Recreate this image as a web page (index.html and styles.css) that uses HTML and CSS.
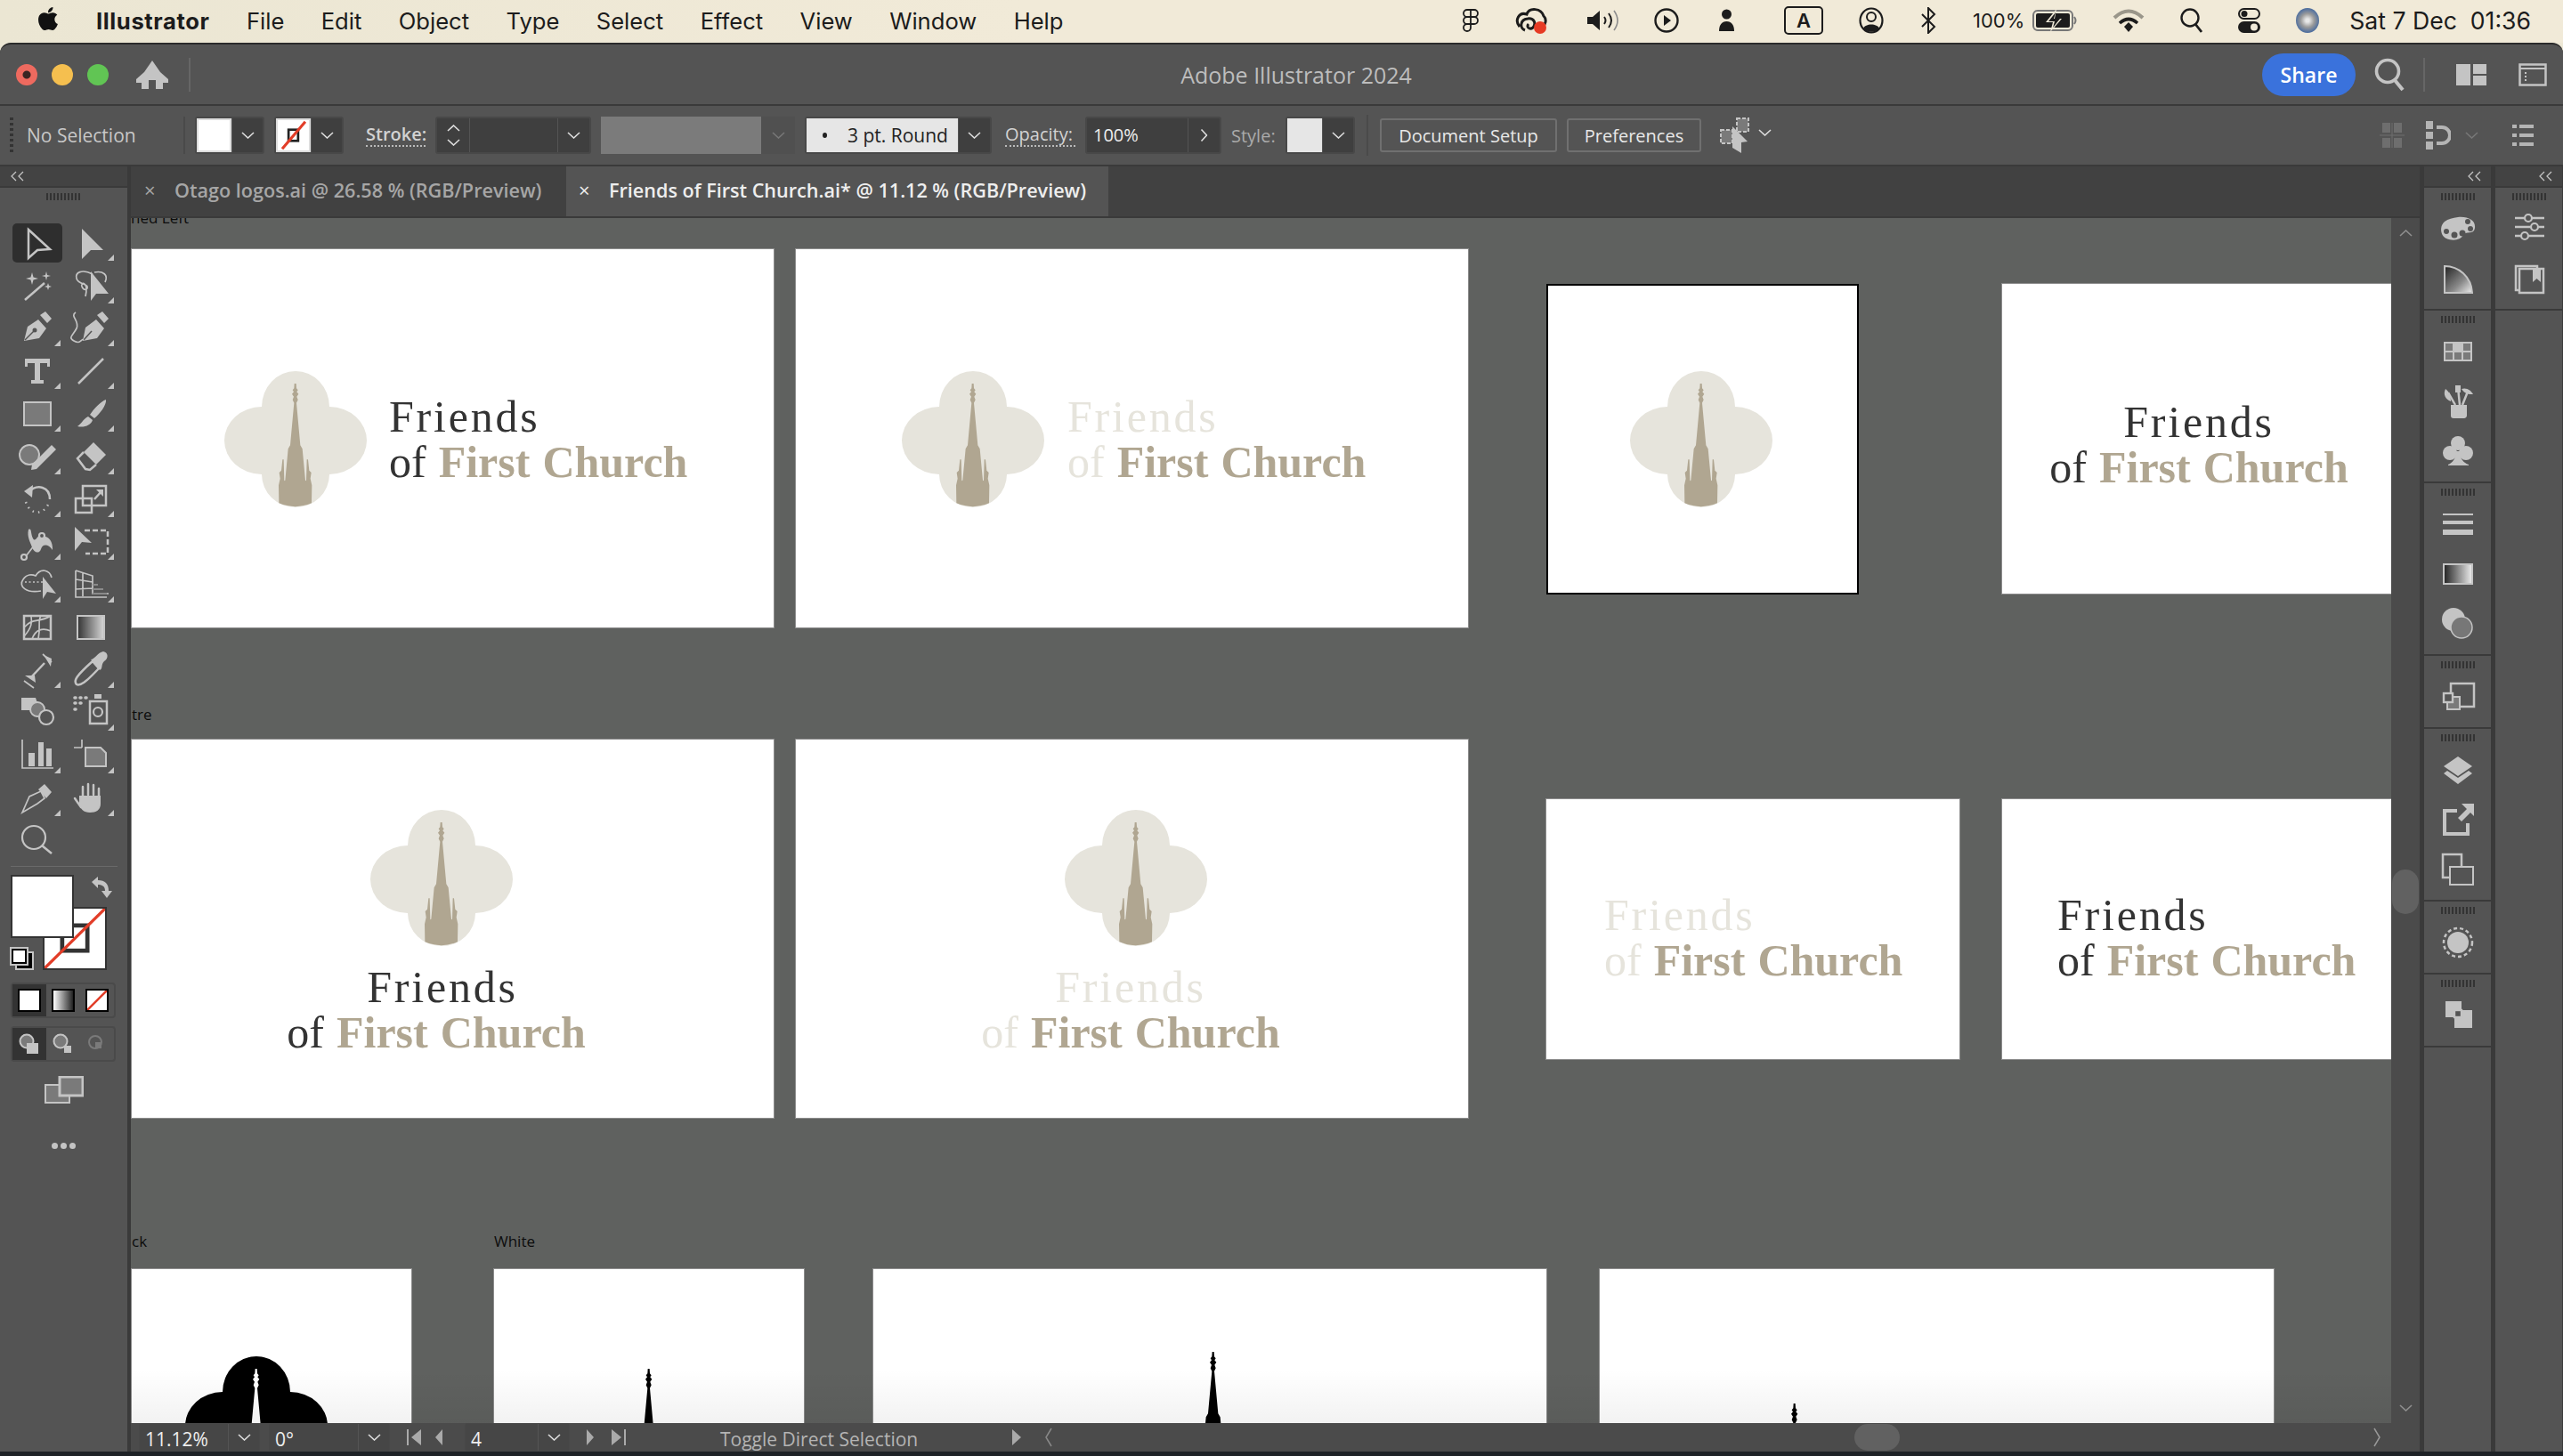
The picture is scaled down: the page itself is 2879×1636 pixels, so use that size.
FILE: index.html
```html
<!DOCTYPE html>
<html lang="en">
<head>
  <meta charset="utf-8">
  <title>Adobe Illustrator 2024</title>
  <link rel="stylesheet" href="styles.css">
</head>
<body>
  <!-- shared shapes -->
  <svg class="sprite" aria-hidden="true">
    <symbol id="chev" viewBox="0 0 15 8"><path d="M1 1l6.500 6L14 1" fill="none" stroke="currentColor" stroke-width="1.600"/></symbol>
    <symbol id="dbl" viewBox="0 0 16 12"><path d="M6 1L1 6l5 5M14 1L9 6l5 5" fill="none" stroke="currentColor" stroke-width="1.300"/></symbol>
    <symbol id="mark" viewBox="105 90 483 459">
      <path class="foil" d="M234 210A114 120 0 0 1 462 210A126 114 0 0 1 462 438A114 111 0 0 1 234 438A126 114 0 0 1 234 210Z"/>
      <path class="spire" d="M344 132L350 132L351 148L356 154L352 160L358 167L352 176L356 187L351 197L364 340L371 352L381 458L384 460L386 388L390 388L394 425L401 432L398 452L403 475L402 535Q347 558 292 535L291 475L296 452L293 432L300 425L304 388L308 388L310 460L313 458L323 352L330 340L343 197L338 187L342 176L336 167L342 160L338 154L343 148Z"/>
    </symbol>
  </svg>

  <header class="menubar">
    <svg class="apple" viewBox="3 2 18 20"><path d="M17.050 20.280c-.98.95-2.050.8-3.080.35-1.090-.46-2.090-.48-3.240 0-1.440.62-2.200.44-3.060-.35C2.790 15.250 3.510 7.590 9.050 7.310c1.350.07 2.290.74 3.080.8 1.180-.24 2.310-.93 3.570-.84 1.510.12 2.650.72 3.400 1.800-3.120 1.870-2.380 5.980.48 7.130-.57 1.500-1.310 2.990-2.540 4.090zM12.030 7.250c-.15-2.230 1.660-4.070 3.740-4.250.29 2.580-2.340 4.500-3.740 4.250z"/></svg>
    <nav class="menus">
      <span class="app-name">Illustrator</span>
      <span>File</span><span>Edit</span><span>Object</span><span>Type</span><span>Select</span><span>Effect</span><span>View</span><span>Window</span><span>Help</span>
    </nav>
    <div class="status">
      <svg class="st-figma" viewBox="0 0 18 26"><path d="M5 1h8a4 4 0 0 1 0 8h-8a4 4 0 0 1 0-8zM5 9h8a4 4 0 0 1 0 8h-8a4 4 0 0 1 0-8zM5 17h4v4a4 4 0 1 1-4-4zM9 1v16" fill="none" stroke="#1c1c1c" stroke-width="1.800"/></svg>
      <svg class="st-cc" viewBox="0 0 42 30"><path d="M6 22C0 15 5 5 14 8C17 0 30 1 33 10C37 14 35 21 30 23M12 26C6 24 6 14 15 13C22 12 25 18 21 23C17 26 13 22 16 19" fill="none" stroke="#1c1c1c" stroke-width="3"/><circle cx="29" cy="23" r="7" fill="#e63b25"/></svg>
      <svg class="st-sound" viewBox="0 0 35 24"><path d="M0 8h6l8-7v22l-8-7H0z" fill="#1c1c1c"/><path d="M19 8q3 4 0 8M24 4q6 8 0 16" fill="none" stroke="#1c1c1c" stroke-width="2"/><path d="M30 1q8 11 0 22" fill="none" stroke="#8d8d8d" stroke-width="1.600"/></svg>
      <svg class="st-play" viewBox="0 0 28 28"><circle cx="14" cy="14" r="12.500" fill="none" stroke="#1c1c1c" stroke-width="2.400"/><path d="M11 8l8 6-8 6z" fill="#1c1c1c"/></svg>
      <svg class="st-person" viewBox="0 0 38 28"><circle cx="13.500" cy="7" r="5.500" fill="#1c1c1c"/><path d="M5 26c0-7 3-11 8.500-11S22 19 22 26z" fill="#1c1c1c"/></svg>
      <span class="st-a">A</span>
      <svg class="st-user" viewBox="0 0 28 30"><ellipse cx="14" cy="15" rx="12.500" ry="13.500" fill="none" stroke="#1c1c1c" stroke-width="2.200"/><circle cx="14" cy="11" r="5" fill="none" stroke="#1c1c1c" stroke-width="2"/><path d="M5 24c2-6 16-6 18 0-4 5-14 5-18 0z" fill="#1c1c1c"/></svg>
      <svg class="st-bt" viewBox="0 0 20 30"><path d="M3 8l14 14-7 7V1l7 7L3 22" fill="none" stroke="#1c1c1c" stroke-width="2"/></svg>
      <div class="st-batt"><span>100%</span>
        <svg viewBox="0 0 50 26"><rect x="1" y="2" width="44" height="22" rx="5" fill="none" stroke="#777" stroke-width="2"/><rect x="4" y="5" width="38" height="16" rx="2" fill="#1c1c1c"/><path d="M47 9q3 4 0 8" fill="none" stroke="#777" stroke-width="2"/><path d="M27 0L15 15h8l-3 11 13-15h-8z" fill="#efe9d8"/><path d="M26 4l-8 10h7l-2 7 8-10h-7z" fill="#1c1c1c"/></svg>
      </div>
      <svg class="st-wifi" viewBox="0 0 36 28"><path d="M2 11q16-15 32 0" fill="none" stroke="#9a968a" stroke-width="4"/><path d="M8 17q10-9 20 0" fill="none" stroke="#1c1c1c" stroke-width="3.600"/><path d="M13 21l5-5 5 5-5 6z" fill="#1c1c1c"/></svg>
      <svg class="st-search" viewBox="0 0 25 28"><circle cx="11" cy="11" r="9.500" fill="none" stroke="#1c1c1c" stroke-width="2.400"/><path d="M17 18l7 9" stroke="#1c1c1c" stroke-width="2.800"/></svg>
      <svg class="st-ctrl" viewBox="0 0 25 28"><rect x="1" y="1" width="23" height="11" rx="5.500" fill="none" stroke="#1c1c1c" stroke-width="2"/><circle cx="7" cy="6.500" r="3.500" fill="#1c1c1c"/><rect x="0" y="15" width="25" height="13" rx="6.500" fill="#1c1c1c"/><circle cx="18" cy="21.500" r="4" fill="#efe9d8"/></svg>
      <span class="st-siri"></span>
      <span class="clock">Sat 7 Dec&nbsp;&nbsp;01:36</span>
    </div>
  </header>

  <div class="window">
    <div class="titlebar">
      <span class="light red"></span><span class="light yellow"></span><span class="light green"></span>
      <svg class="home" viewBox="0 0 36 32"><path d="M18 0L27 13 36 21V25H30V32H22V22H14V32H6V25H0V21L9 13Z" fill="#c4c4c4"/></svg>
      <span class="vrule title-rule"></span>
      <div class="app-title">Adobe Illustrator 2024</div>
      <button class="share">Share</button>
      <svg class="t-search" viewBox="0 0 34 38"><circle cx="15" cy="15" r="12.500" fill="none" stroke="#c4c4c4" stroke-width="3.600"/><path d="M23 25l9 11" stroke="#c4c4c4" stroke-width="4"/></svg>
      <span class="vrule share-rule"></span>
      <svg class="t-layout" viewBox="0 0 34 24"><path d="M0 0h16v24H0zM19 0h15v11H19zM19 13h15v11H19z" fill="#c4c4c4"/></svg>
      <svg class="t-panel" viewBox="0 0 32 26"><rect x="1.500" y="1.500" width="29" height="23" fill="none" stroke="#c4c4c4" stroke-width="2.500"/><path d="M1 6h30" stroke="#c4c4c4" stroke-width="2"/><path d="M7 10h2v2H7zM7 14h2v2H7zM7 18h2v2H7z" fill="#c4c4c4"/></svg>
    </div>

    <div class="controlbar">
      <span class="dots-v"></span>
      <span class="ctl-name">No Selection</span>
      <span class="vrule name-rule"></span>
      <div class="box swatch-box"><span class="swatch"></span><span class="drop"><svg class="chev"><use href="#chev"/></svg></span></div>
      <div class="box swatch-box"><span class="swatch no-stroke"><svg viewBox="0 0 38 38"><rect x="13" y="12" width="12" height="14" fill="none" stroke="#222" stroke-width="3"/><path d="M5 36L34 2" stroke="#e23d28" stroke-width="3.500"/></svg></span><span class="drop"><svg class="chev"><use href="#chev"/></svg></span></div>
      <span class="ctl-label link stroke-label">Stroke:</span>
      <div class="box stroke-field">
        <span class="spin"><svg class="chev flip"><use href="#chev"/></svg><svg class="chev"><use href="#chev"/></svg></span>
        <span class="field"></span>
        <span class="drop"><svg class="chev"><use href="#chev"/></svg></span>
      </div>
      <div class="variable"><span class="variable-main"></span><span class="drop dim"><svg class="chev"><use href="#chev"/></svg></span></div>
      <div class="box brush-box"><span class="brush"><i></i>3 pt. Round</span><span class="drop"><svg class="chev"><use href="#chev"/></svg></span></div>
      <span class="ctl-label link opacity-label">Opacity:</span>
      <div class="box opacity-field"><span class="field opacity-value">100%</span><span class="drop"><svg class="chev turn"><use href="#chev"/></svg></span></div>
      <span class="ctl-label style-label">Style:</span>
      <div class="box swatch-box style-box"><span class="swatch pale"></span><span class="drop"><svg class="chev"><use href="#chev"/></svg></span></div>
      <span class="vrule style-rule"></span>
      <button class="ctl-btn doc">Document Setup</button>
      <button class="ctl-btn pref">Preferences</button>
      <svg class="isolate" viewBox="0 0 34 40"><rect x="1" y="14" width="13" height="15" fill="#7a7a7a" stroke="#c4c4c4" stroke-width="2" stroke-dasharray="4 2"/><rect x="19" y="1" width="13" height="15" fill="#7a7a7a" stroke="#c4c4c4" stroke-width="2" stroke-dasharray="4 2"/><path d="M14 10L31 27 24 28 24 40 14 34Z" fill="#c4c4c4"/></svg>
      <svg class="chev iso-chev"><use href="#chev"/></svg>
      <div class="ctl-right">
        <svg class="al-grid" viewBox="0 0 28 28"><path d="M3 0h9v11H3zM16 0h9v11h-9zM3 17h9v11H3zM16 17h9v11h-9z" fill="#6e6e6e"/><path d="M0 14h28M14 0v28" stroke="#6e6e6e"/></svg>
        <svg class="al-mag" viewBox="0 0 28 32"><path d="M0 0h8v9H0zM0 12h8v8H0zM0 23h8v9H0z" fill="#b4b4b4"/><path d="M12 7h6a9 9 0 0 1 0 18h-6" fill="none" stroke="#b4b4b4" stroke-width="4"/></svg>
        <svg class="chev al-chev"><use href="#chev"/></svg>
        <svg class="al-list" viewBox="0 0 24 28"><path d="M0 2h5v4H0zM8 2h16v4H8zM0 12h5v4H0zM8 12h16v4H8zM0 22h5v4H0zM8 22h16v4H8z" fill="#b4b4b4"/></svg>
      </div>
    </div>

    <div class="work">
      <aside class="toolbar">
        <div class="collapse left-c"><svg class="dbl"><use href="#dbl"/></svg></div>
        <div class="tool-panel">
          <span class="grip"></span>
          <div class="tools">
            <button class="tool active"><svg viewBox="0 0 60 48"><path class="ln" d="M20 9L44 31 30 32 20 41Z"/></svg></button>
            <button class="tool more"><svg viewBox="0 0 60 48"><path class="ic" d="M20 8L44 32 30 32 20 42Z"/></svg></button>

            <button class="tool"><svg viewBox="0 0 60 48"><path class="ln" stroke-width="4" d="M16 40L38 21"/><path class="ic" d="M24 9l1.500 5.500L31 16l-5.500 1.500L24 23l-1.500-5.500L17 16l5.500-1.500zM40 8l1 4 4 1-4 1-1 4-1-4-4-1 4-1zM42 21l1 3 3 1-3 1-1 3-1-3-3-1 3-1z"/></svg></button>
            <button class="tool more"><svg viewBox="0 0 60 48"><path class="ln thin" d="M32 11C20 5 12 9 14 16S25 21 26 25 22 30 20 25 28 18 24 36M34 9C44 7 50 12 46 20"/><path class="ic" d="M30 8L50 33 36 33 30 41Z"/></svg></button>

            <button class="tool more"><svg viewBox="0 0 60 48"><path class="ic" d="M15 38L19 22 31 14 40 24 32 35ZM33 9L39 5 46 13 41 18Z"/><path class="slit" d="M16 37L26 27"/><circle class="hole" cx="27" cy="26" r="2.500"/></svg></button>
            <button class="tool more"><svg viewBox="0 0 60 48"><path class="ic" d="M21 38L24 23 36 14 45 24 37 35ZM37 9L43 5 50 13 45 18Z"/><path class="slit" d="M22 37L31 27"/><path class="ln thin" d="M13 6C6 10 18 16 14 24S4 34 11 38 18 37 22 36"/></svg></button>

            <button class="tool more"><svg viewBox="0 0 60 48"><path class="ic" d="M16 10H44V19H41V15H33V34H37V38H23V34H27V15H19V19H16Z"/></svg></button>
            <button class="tool more"><svg viewBox="0 0 60 48"><path class="ln" d="M16 38L44 10"/></svg></button>

            <button class="tool more"><svg viewBox="0 0 60 48"><rect class="gr" x="15" y="11" width="30" height="26"/></svg></button>
            <button class="tool more"><svg viewBox="0 0 60 48"><path class="ic" d="M47 8C48 14 40 24 34 29L29 25C33 19 41 10 47 8ZM27 27L32 31C30 37 22 40 15 38C19 36 21 30 27 27Z"/></svg></button>

            <button class="tool more"><svg viewBox="0 0 60 48"><circle class="gr" cx="21" cy="22" r="11"/><path class="ic" d="M46 11L51 16 29 38 23 39 24 33Z"/></svg></button>
            <button class="tool more"><svg viewBox="0 0 60 48"><path class="ic" d="M33 8L47 22 36 33 22 19Z"/><path class="ln" d="M22 19L15 26 24 38 29 39 36 33"/></svg></button>

            <button class="tool more"><svg viewBox="0 0 60 48"><path class="ln" stroke-width="3" d="M20 16C30 6 44 10 44 24"/><path class="ic" d="M15 15L25 8 24 22Z"/><path class="ln" stroke-width="2" stroke-dasharray="1.500 5" d="M17 27C22 42 36 42 42 30"/></svg></button>
            <button class="tool more"><svg viewBox="0 0 60 48"><rect class="ln" x="21" y="9" width="26" height="22"/><rect class="ln" x="13" y="23" width="18" height="16"/><path class="ln" stroke-width="2.500" d="M34 24L42 15"/><path class="ic" d="M36 13H44V21Z"/></svg></button>

            <button class="tool more"><svg viewBox="0 0 60 48"><path class="ic" d="M20 10C24 8 22 14 25 20 28 25 30 16 34 16L32 20C38 14 48 20 47 33 42 26 36 26 34 32 32 38 26 36 24 30 22 24 18 18 20 10Z"/><path class="ln thin" d="M17 40L37 14"/><circle class="hole-ln" cx="15" cy="41" r="3"/><circle class="hole-ln" cx="35" cy="17" r="3"/></svg></button>
            <button class="tool more"><svg viewBox="0 0 60 48"><path class="ic" d="M12 7L31 25 20 24 12 34Z"/><path class="ln" stroke-dasharray="6 3" d="M23 11H49V37H24"/></svg></button>

            <button class="tool more"><svg viewBox="0 0 60 48"><path class="ln thin" d="M34 31C18 34 8 26 14 18 18 12 24 12 28 14 34 4 44 8 46 16"/><path class="ln thin" stroke-dasharray="2 2.500" d="M16 21H36"/><path class="ic" d="M36 15L51 34 41 32 36 40Z"/></svg></button>
            <button class="tool more"><svg viewBox="0 0 60 48"><path class="ln thin" d="M13 8L32 14V34H50M13 8V38H48M13 18L32 21M13 29L32 28M21 10V37"/><path class="dash" d="M32 24H38M32 29H44M32 34H48"/></svg></button>

            <button class="tool"><svg viewBox="0 0 60 48"><rect class="ln" x="15" y="11" width="30" height="26"/><path class="ln thin" d="M15 24C26 12 30 20 45 11M15 34C24 24 24 18 23 11M24 37C28 26 36 24 45 28M31 37C34 22 30 16 34 11"/></svg></button>
            <button class="tool"><svg viewBox="0 0 60 48"><defs><linearGradient id="tg"><stop offset="0" stop-color="#333"/><stop offset="1" stop-color="#d8d8d8"/></linearGradient></defs><rect x="15" y="11" width="30" height="26" fill="url(#tg)" stroke="#c4c4c4" stroke-width="2"/></svg></button>

            <button class="tool more"><svg viewBox="0 0 60 48"><path class="ln thin" d="M15 36L26 44M36 6L46 15"/><path class="ln" stroke-width="3" d="M22 33L38 16"/><path class="ic" d="M16 30L28 38 27 30ZM37 7L45 20 46 11Z"/></svg></button>
            <button class="tool more"><svg viewBox="0 0 60 48"><path class="ln" d="M14 40C10 36 14 30 32 14L39 22C24 38 18 42 14 40Z"/><path class="ic" d="M30 12C34 12 38 4 44 3 50 4 50 11 45 14 41 18 44 22 40 24Z"/></svg></button>

            <button class="tool"><svg viewBox="0 0 60 48"><path class="ic" d="M12 7H28L31 16 24 19 24 21 12 21Z"/><circle class="gr" cx="30" cy="20" r="8"/><circle class="hole-ln" cx="40" cy="29" r="8"/></svg></button>
            <button class="tool more"><svg viewBox="0 0 60 48"><path class="dotpath" d="M12 7H13M18 7H19M24 7H25M12 13H13M18 13H19M12 20H13"/><path class="ic" d="M34 3H42V8H34Z"/><rect class="ln" x="29" y="11" width="19" height="25"/><circle class="hole-ln" cx="38" cy="23" r="5"/></svg></button>

            <button class="tool more"><svg viewBox="0 0 60 48"><path class="ln thin" d="M13 6V38H48"/><path class="ic" d="M20 21H27V36H20ZM31 9H37V36H31ZM40 16H46V36H40Z"/></svg></button>
            <button class="tool more"><svg viewBox="0 0 60 48"><path class="ln thin" d="M20 6V15M11 15H20"/><path class="gr" d="M24 15H41L47 21V36H24Z"/></svg></button>

            <button class="tool more"><svg viewBox="0 0 60 48"><path class="ln thin" d="M13 40L21 22 34 16 38 24 30 30Z"/><path class="ic" d="M31 14L38 8 46 17 40 24Z"/></svg></button>
            <button class="tool more"><svg viewBox="0 0 60 48"><path class="ln" stroke-width="5" stroke-linecap="round" d="M21 22V11M27 20V8M33 20V9M39 24V13M19 34L12 24"/><path class="ic" d="M17 21H41V30C41 37 36 40 29 40 22 40 18 36 17 30Z"/></svg></button>

            <button class="tool"><svg viewBox="0 0 60 48"><circle class="hole-ln" cx="26" cy="20" r="13"/><path class="ln" stroke-width="3.500" d="M35 29L46 38"/></svg></button>
          </div>

          <hr class="tool-sep">
          <div class="fill-stroke">
            <span class="big-stroke"><svg viewBox="0 0 72 71"><rect x="21" y="20" width="30" height="30" fill="none" stroke="#333" stroke-width="5"/><path d="M0 71L72 0" stroke="#e23d28" stroke-width="3.500"/></svg></span>
            <span class="big-fill"></span>
            <svg class="swap" viewBox="0 0 24 24"><path d="M1 6L8 0V4C16 4 20 8 20 16H24L18 24 12 16H16C16 11 13 9 8 9V13Z" fill="#c4c4c4"/></svg>
            <span class="mini mini-back"></span><span class="mini mini-front"></span>
          </div>
          <div class="seg">
            <span class="on"><i class="cs solid"></i></span>
            <span><i class="cs grad"></i></span>
            <span><i class="cs none"><svg viewBox="0 0 26 26"><path d="M0 26L26 0" stroke="#e23d28" stroke-width="3"/></svg></i></span>
          </div>
          <div class="seg draw">
            <span class="on"><svg viewBox="0 0 24 24"><circle cx="9" cy="9" r="7.500" fill="#7a7a7a" stroke="#c4c4c4" stroke-width="2"/><rect x="9" y="11" width="13" height="12" fill="#c4c4c4"/></svg></span>
            <span><svg viewBox="0 0 24 24"><circle cx="9" cy="9" r="7.500" fill="#7a7a7a" stroke="#c4c4c4" stroke-width="2"/><rect x="13" y="14" width="8" height="8" fill="#c4c4c4"/></svg></span>
            <span><svg viewBox="0 0 24 24"><circle cx="10" cy="10" r="7" fill="none" stroke="#7a7a7a" stroke-width="2"/><rect x="10" y="10" width="7" height="7" fill="#7a7a7a"/></svg></span>
          </div>
          <svg class="screen" viewBox="0 0 44 31"><rect x="1" y="10" width="27" height="20" fill="#7a7a7a" stroke="#c4c4c4" stroke-width="2"/><rect x="17" y="1" width="26" height="21" fill="#7a7a7a" stroke="#c4c4c4" stroke-width="3"/></svg>
          <div class="ellipsis"><i></i><i></i><i></i></div>
        </div>
      </aside>

      <main class="center">
        <div class="tabs">
          <div class="tab"><span class="x">×</span>Otago logos.ai @ 26.58 % (RGB/Preview)</div>
          <div class="tab current"><span class="x">×</span>Friends of First Church.ai* @ 11.12 % (RGB/Preview)</div>
        </div>
        <div class="view">
          <div class="canvas">
            <span class="lbl lbl-a">ned Left</span>
            <span class="lbl lbl-b">tre</span>
            <span class="lbl lbl-c">ck</span>
            <span class="lbl lbl-d">White</span>

            <section class="board a1">
              <svg class="mark m-a1"><use href="#mark"/></svg>
              <p class="word w-a1">Friends<br>of <b>First Church</b></p>
            </section>
            <section class="board a2">
              <svg class="mark m-a2"><use href="#mark"/></svg>
              <p class="word light w-a2">Friends<br>of <b>First Church</b></p>
            </section>
            <section class="board a3"><svg class="mark m-a3"><use href="#mark"/></svg></section>
            <section class="board a4"><p class="word mid w-a4">Friends<br>of <b>First Church</b></p></section>

            <section class="board a5">
              <svg class="mark m-a5"><use href="#mark"/></svg>
              <p class="word mid w-a5">Friends<br>of <b>First Church</b></p>
            </section>
            <section class="board a6">
              <svg class="mark m-a6"><use href="#mark"/></svg>
              <p class="word mid light w-a6">Friends<br>of <b>First Church</b></p>
            </section>
            <section class="board a7"><p class="word light w-a7">Friends<br>of <b>First Church</b></p></section>
            <section class="board a8"><p class="word w-a8">Friends<br>of <b>First Church</b></p></section>

            <section class="board a9"><svg class="mark black m-a9"><use href="#mark"/></svg></section>
            <section class="board a10"><svg class="mark only m-a10"><use href="#mark"/></svg></section>
            <section class="board a11"><svg class="mark only m-a11"><use href="#mark"/></svg></section>
            <section class="board a12"><svg class="mark only m-a12"><use href="#mark"/></svg></section>
            <div class="fade"></div>
          </div>
          <div class="vscroll">
            <svg class="chev flip up"><use href="#chev"/></svg>
            <span class="vthumb"></span>
            <svg class="chev down"><use href="#chev"/></svg>
          </div>
        </div>
        <div class="statusbar">
          <div class="box sb-box"><span class="field">11.12%</span><span class="drop"><svg class="chev"><use href="#chev"/></svg></span></div>
          <div class="box sb-box"><span class="field">0°</span><span class="drop"><svg class="chev"><use href="#chev"/></svg></span></div>
          <svg class="pager" viewBox="0 0 50 24"><path d="M2 3h2v18H2zM18 3v18L7 12zM42 3l-8 9 8 9z" fill="#aaa"/></svg>
          <div class="box sb-page"><span class="field">4</span><span class="drop"><svg class="chev"><use href="#chev"/></svg></span></div>
          <svg class="pager" viewBox="0 0 50 24"><path d="M2 3v18l8-9zM30 3v18l11-9zM44 3h2v18h-2z" fill="#aaa"/></svg>
          <span class="sb-text">Toggle Direct Selection</span>
          <svg class="sb-arrow" viewBox="0 0 12 24"><path d="M1 3v18l10-9z" fill="#aaa"/></svg>
          <svg class="sb-lt" viewBox="0 0 10 24"><path d="M8 2L2 12l6 10" fill="none" stroke="#888" stroke-width="1.500"/></svg>
          <span class="hthumb"></span>
          <svg class="sb-gt" viewBox="0 0 10 24"><path d="M2 2l6 10-6 10" fill="none" stroke="#999" stroke-width="1.500"/></svg>
        </div>
      </main>

      <aside class="dock">
        <div class="collapse"><svg class="dbl"><use href="#dbl"/></svg></div>
        <div class="group">
          <span class="grip"></span>
          <div class="pi"><svg viewBox="0 0 40 40"><path class="ic" d="M20 7C32 6 40 11 39 19 38 27 30 22 26 27 23 33 14 34 7 31 0 28-1 17 5 12 9 9 14 8 20 7Z"/><circle class="hole" cx="31" cy="12" r="3"/><circle class="hole" cx="34" cy="20" r="3"/><circle class="hole" cx="25" cy="25" r="3.500"/><circle class="hole" cx="16" cy="27" r="3.500"/><circle class="hole" cx="7" cy="23" r="3"/></svg></div>
          <div class="pi"><svg viewBox="0 0 40 40"><defs><linearGradient id="cg" x1="0" y1="0" x2="1" y2="1"><stop offset="0" stop-color="#222"/><stop offset=".6" stop-color="#888"/><stop offset="1" stop-color="#eee"/></linearGradient></defs><path d="M5 6C21 6 35 18 36 36H5Z" fill="url(#cg)" stroke="#c4c4c4" stroke-width="2"/></svg></div>
        </div>
        <div class="group">
          <span class="grip"></span>
          <div class="pi"><svg viewBox="0 0 40 40"><rect class="ic" x="4" y="9" width="32" height="22"/><path class="gr nostroke" d="M6 11H14V19H6ZM26 11H34V19H26ZM6 21H14V29H6ZM16 21H24V29H16ZM26 21H34V29H26Z"/></svg></div>
          <div class="pi"><svg viewBox="0 0 40 40"><path class="ic" d="M12 24H30V36C30 38 28 39 27 39H15C13 39 12 38 12 36Z"/><path class="ln" d="M17 24L9 10M22 24L20 4M25 24L31 9"/><path class="ic" d="M6 6C3 12 6 18 12 20 12 14 10 9 6 6ZM17 2H23V10H17ZM24 6C30 4 35 8 37 12 32 12 28 12 24 6Z"/></svg></div>
          <div class="pi"><svg viewBox="0 0 40 40"><circle class="ic" cx="20" cy="11" r="8"/><circle class="ic" cx="11" cy="22" r="8"/><circle class="ic" cx="29" cy="22" r="8"/><path class="ic" d="M18 20H22C22 28 26 33 32 35V36H9V35C14 33 18 28 18 20Z"/></svg></div>
        </div>
        <div class="group">
          <span class="grip"></span>
          <div class="pi"><svg viewBox="0 0 40 40"><path class="ic" d="M3 8H37V10H3ZM3 16H37V20H3ZM3 26H37V32H3Z"/></svg></div>
          <div class="pi"><svg viewBox="0 0 40 40"><defs><linearGradient id="pg"><stop offset="0" stop-color="#222"/><stop offset="1" stop-color="#eee"/></linearGradient></defs><rect x="4" y="9" width="32" height="22" fill="url(#pg)" stroke="#c4c4c4" stroke-width="2"/></svg></div>
          <div class="pi"><svg viewBox="0 0 40 40"><circle class="ic" cx="15" cy="15" r="13"/><circle cx="24" cy="24" r="12" fill="#777" stroke="#c4c4c4" stroke-width="1.500"/></svg></div>
        </div>
        <div class="group">
          <span class="grip"></span>
          <div class="pi"><svg viewBox="0 0 40 40"><rect class="ln" x="12" y="5" width="26" height="26" stroke-width="2"/><rect class="gr" x="8" y="20" width="14" height="14"/><rect class="boxdark" x="4" y="16" width="10" height="10"/></svg></div>
        </div>
        <div class="group">
          <span class="grip"></span>
          <div class="pi"><svg viewBox="0 0 40 40"><path class="ic" d="M20 5L36 16 20 27 4 16ZM4 24L8 21 20 29 32 21 36 24 20 36Z"/></svg></div>
          <div class="pi"><svg viewBox="0 0 40 40"><path class="ic" d="M3 8H19V12H7V34H29V24H33V38H3Z"/><path class="ic" d="M24 2H38V16L34 12 24 22 20 18 30 8Z"/></svg></div>
          <div class="pi"><svg viewBox="0 0 40 40"><rect class="ln" x="3" y="3" width="21" height="26" stroke-width="2"/><rect x="11" y="17" width="26" height="20" fill="#545454" stroke="#c4c4c4" stroke-width="2"/></svg></div>
        </div>
        <div class="group">
          <span class="grip"></span>
          <div class="pi"><svg viewBox="0 0 40 40"><circle class="ic" cx="20" cy="20" r="12"/><circle class="ln" cx="20" cy="20" r="16" stroke-width="2" stroke-dasharray="4 3"/></svg></div>
        </div>
        <div class="group">
          <span class="grip"></span>
          <div class="pi"><svg viewBox="0 0 40 40"><path class="ic" d="M6 4H24V22H6ZM16 14H36V34H16Z"/><rect class="boxdark" x="16" y="14" width="8" height="8"/></svg></div>
        </div>
        <div class="group rest"></div>
      </aside>

      <aside class="dock">
        <div class="collapse"><svg class="dbl"><use href="#dbl"/></svg></div>
        <div class="group">
          <span class="grip"></span>
          <div class="pi"><svg viewBox="0 0 40 40"><path class="ln" stroke-width="1.800" d="M4 8H14M24 8H37M4 18H21M31 18H37M4 28H10M20 28H37"/><circle class="hole-ln" cx="19" cy="8" r="4"/><circle class="hole-ln" cx="26" cy="18" r="4"/><circle class="hole-ln" cx="15" cy="28" r="4"/></svg></div>
          <div class="pi"><svg viewBox="0 0 40 40"><path class="ln" stroke-width="2" d="M8 33H5V6H29V9"/><rect class="ln" x="9" y="9" width="27" height="27" stroke-width="2"/><path class="ic" d="M24 9H33V24L28.500 20 24 24Z"/></svg></div>
        </div>
        <div class="group rest"></div>
      </aside>
    </div>
  </div>
  <div class="dockedge"></div>
</body>
</html>
```

FILE: styles.css
```css
* {
  box-sizing: border-box;
}
html, body {
  margin: 0;
  padding: 0;
}
body {
  width: 2879px;
  height: 1636px;
  overflow: hidden;
  background: #ece7d5;
  font-family: "Open Sans", "Liberation Sans", sans-serif;
  color: #c4c4c4;
}
button {
  font: inherit;
  padding: 0;
  border: 0;
  background: none;
  color: inherit;
}
svg {
  display: block;
  flex: none;
}
.sprite {
  position: absolute;
  width: 0;
  height: 0;
}
.foil {
  fill: var(--foil, #e6e4dc);
}
.spire {
  fill: var(--spire, #b0a691);
}

/* mac menu bar */
.menubar {
  display: flex;
  align-items: center;
  height: 48px;
  padding: 0 36px 2px 41px;
  background: linear-gradient(90deg, #ebe6d3, #f1ead8 40%, #f1ead8);
  font-family: Inter, "Liberation Sans", sans-serif;
  font-size: 25.600px;
  color: #1c1c1c;
}
.apple {
  width: 26px;
  height: 30px;
  margin-top: -4px;
  fill: #111;
}
.menus {
  display: flex;
  gap: 41.400px;
  margin-left: 41px;
}
.app-name {
  font-weight: 700;
  letter-spacing: 0.6px;
}
.status {
  display: flex;
  align-items: center;
  gap: 40px;
  margin-left: auto;
}
.st-figma { width: 18px; height: 26px; }
.st-cc { width: 42px; height: 30px; }
.st-sound { width: 35px; height: 24px; }
.st-play { width: 28px; height: 28px; }
.st-person { width: 38px; height: 28px; }
.st-a {
  width: 44px;
  height: 32px;
  border: 2px solid #1c1c1c;
  border-radius: 5px;
  font-size: 22px;
  font-weight: 600;
  line-height: 28px;
  text-align: center;
}
.st-user { width: 28px; height: 30px; }
.st-bt { width: 20px; height: 30px; }
.st-batt {
  display: flex;
  align-items: center;
  gap: 9px;
  font-size: 22px;
}
.st-batt svg { width: 50px; height: 26px; }
.st-wifi { width: 36px; height: 28px; }
.st-search { width: 25px; height: 28px; }
.st-ctrl { width: 25px; height: 28px; }
.st-siri {
  width: 26px;
  height: 28px;
  border-radius: 50%;
  background: radial-gradient(circle at 50% 50%, #e8e8e8 10%, #9a9a9a 40%, #4f6f9f 70%, #6a6a62);
}
.clock {
  margin-left: -6px;
  font-size: 26.600px;
  white-space: nowrap;
}

/* app window */
.window {
  display: flex;
  flex-direction: column;
  gap: 2px;
  height: 1583px;
  border-top: 2px solid #2b2b2b;
  border-radius: 12px 12px 0 0;
  background: #3a3a3a;
  overflow: hidden;
}
.titlebar {
  display: flex;
  align-items: center;
  flex: none;
  height: 67px;
  padding-left: 18px;
  background: #545454;
}
.light {
  width: 24px;
  height: 24px;
  margin-right: 16px;
  border-radius: 50%;
}
.red {
  background: radial-gradient(circle, #3a2522 0 4px, #ee6a5f 5px);
}
.yellow { background: #f5bf4f; }
.green { background: #61c554; }
.home {
  width: 36px;
  height: 32px;
  margin-left: 15px;
}
.vrule {
  flex: none;
  width: 2px;
  background: #666;
}
.title-rule {
  height: 38px;
  margin-left: 23px;
}
.app-title {
  flex: 1;
  padding-left: 157px;
  text-align: center;
  font-size: 25px;
  color: #bdbdbd;
}
.share {
  width: 105px;
  height: 48px;
  border-radius: 24px;
  background: #3a72dc;
  color: #fff;
  font-size: 23px;
  font-weight: 600;
}
.t-search {
  width: 34px;
  height: 38px;
  margin-left: 21px;
}
.share-rule {
  height: 38px;
  margin-left: 21px;
}
.t-layout {
  width: 34px;
  height: 24px;
  margin-left: 35px;
}
.t-panel {
  width: 32px;
  height: 26px;
  margin: 0 18px 0 36px;
}

.controlbar {
  display: flex;
  align-items: center;
  flex: none;
  gap: 11px;
  height: 66px;
  background: #545454;
  font-size: 20px;
}
.dots-v {
  width: 4px;
  height: 40px;
  margin-left: 11px;
  background: repeating-linear-gradient(#333 0 3px, transparent 3px 6px);
}
.ctl-name {
  width: 120px;
  margin-left: 4px;
  font-size: 21px;
  white-space: nowrap;
  color: #c8c8c8;
}
.name-rule {
  height: 42px;
  margin-left: 45px;
  background: #4a4a4a;
}
.box {
  display: flex;
  height: 42px;
  border: 2px solid #484848;
  border-radius: 3px;
  background: #3f3f3f;
}
.drop {
  display: flex;
  align-items: center;
  justify-content: center;
  flex: none;
  width: 36px;
  border-left: 1px solid #545454;
  color: #ddd;
}
.dim { color: #777; }
.chev {
  width: 15px;
  height: 8px;
}
.flip { transform: scaleY(-1); }
.turn { transform: rotate(-90deg); }
.swatch-box { width: 78px; }
.swatch {
  flex: none;
  width: 39px;
  background: #fff;
  border: 2px solid #ddd;
}
.swatch.pale {
  background: #e6e6e6;
  border: 0;
}
.no-stroke svg {
  width: 100%;
  height: 100%;
}
.ctl-label {
  white-space: nowrap;
  color: #d2d2d2;
}
.link {
  border-bottom: 2px dotted #bbb;
  line-height: 24px;
}
.stroke-label {
  width: 67px;
  margin-left: 14px;
  font-weight: 600;
}
.stroke-field { width: 175px; }
.spin {
  display: flex;
  flex-direction: column;
  align-items: center;
  justify-content: space-evenly;
  flex: none;
  width: 37px;
  border-right: 1px solid #545454;
  color: #ddd;
}
.field {
  flex: 1;
  padding-left: 8px;
  line-height: 38px;
  color: #eee;
}
.variable {
  display: flex;
  width: 218px;
  height: 42px;
}
.variable-main {
  flex: 1;
  background: #7b7b7b;
}
.variable .drop {
  width: 38px;
  border: 0;
  background: #505050;
}
.brush-box { width: 210px; }
.brush {
  display: flex;
  align-items: center;
  flex: 1;
  padding-left: 18px;
  background: #e6e6e6;
  font-size: 21px;
  color: #222;
  white-space: nowrap;
}
.brush i {
  width: 5px;
  height: 6px;
  margin-right: 23px;
  border-radius: 50%;
  background: #222;
}
.opacity-label {
  width: 79px;
  margin-left: 4px;
}
.opacity-field { width: 153px; }
.opacity-value {
  padding-left: 7px;
}
.style-label {
  width: 51px;
  color: #aaa;
}
.style-box { margin-left: -1px; }
.style-rule {
  height: 46px;
  margin-left: 2px;
  background: #4a4a4a;
}
.ctl-btn {
  height: 38px;
  border: 2px solid #707070;
  border-radius: 3px;
  color: #e8e8e8;
}
.doc { width: 199px; margin-left: 2px; }
.pref { width: 151px; }
.isolate {
  width: 34px;
  height: 40px;
  margin-left: 10px;
}
.iso-chev { margin-left: -2px; margin-top: -6px; color: #ddd; }
.ctl-right {
  display: flex;
  align-items: center;
  margin-left: auto;
  padding-right: 33px;
}
.al-grid { width: 28px; height: 28px; }
.al-mag { width: 28px; height: 32px; margin-left: 24px; }
.al-chev { margin-left: 16px; color: #777; }
.al-list { width: 24px; height: 28px; margin-left: 38px; }

/* work area */
.work {
  display: flex;
  flex: none;
  height: 1444px;
}
.toolbar {
  display: flex;
  flex-direction: column;
  gap: 2px;
  flex: none;
  width: 147px;
  padding-right: 4px;
}
.collapse {
  display: flex;
  align-items: center;
  justify-content: flex-end;
  flex: none;
  height: 22px;
  padding-right: 10px;
  background: #434343;
  color: #c4c4c4;
}
.left-c {
  justify-content: flex-start;
  padding: 0 0 0 12px;
}
.dbl {
  width: 16px;
  height: 12px;
}
.tool-panel {
  flex: 1;
  padding: 6px 0 0 12px;
  background: #545454;
}
.grip {
  display: block;
  width: 38px;
  height: 8px;
  margin: 0 auto;
  background: repeating-linear-gradient(90deg, #333 0 2px, transparent 2px 4px);
}
.tool-panel > .grip {
  margin: 0 0 0 40px;
}
.tools {
  display: grid;
  grid-template-columns: 60px 60px;
  grid-auto-rows: 48px;
  margin-top: 24px;
}
.tool {
  position: relative;
  display: block;
  width: 60px;
  height: 48px;
}
.tool svg {
  width: 60px;
  height: 48px;
}
.tool.more::after {
  content: "";
  position: absolute;
  right: 4px;
  bottom: 4px;
  width: 7px;
  height: 7px;
  background: #c4c4c4;
  clip-path: polygon(100% 0, 100% 100%, 0 100%);
}
.tool.active::before {
  content: "";
  position: absolute;
  left: 2px;
  top: 2px;
  width: 56px;
  height: 44px;
  border-radius: 5px;
  background: #2e2e2e;
}
.tool.active svg {
  position: relative;
}
.ic { fill: #c4c4c4; }
.gr { fill: #7a7a7a; stroke: #c4c4c4; stroke-width: 2; }
.gr.nostroke { stroke: none; }
.ln { fill: none; stroke: #c4c4c4; stroke-width: 2.500; }
.ln.thin { stroke-width: 1.700; }
.slit { fill: none; stroke: #545454; stroke-width: 1.500; }
.hole { fill: #545454; }
.hole-ln { fill: #545454; stroke: #c4c4c4; stroke-width: 2.200; }
.boxdark { fill: #545454; stroke: #c4c4c4; stroke-width: 2.400; }
.dash { fill: none; stroke: #8a8a8a; stroke-width: 2; }
.dotpath { fill: none; stroke: #c4c4c4; stroke-width: 3.600; stroke-linecap: round; }

.tool-sep {
  width: 120px;
  height: 1px;
  margin: 4px 0 9px;
  border: 0;
  background: #6a6a6a;
}
.fill-stroke {
  position: relative;
  width: 120px;
  height: 107px;
}
.big-fill {
  position: absolute;
  left: 0;
  top: 0;
  width: 71px;
  height: 71px;
  border: 2px solid #333;
  background: #fff;
}
.big-stroke {
  position: absolute;
  left: 36px;
  top: 36px;
  width: 72px;
  height: 71px;
  border: 2px solid #333;
  background: #fff;
}
.big-stroke svg {
  width: 100%;
  height: 100%;
}
.swap {
  position: absolute;
  left: 90px;
  top: 2px;
  width: 24px;
  height: 24px;
}
.mini {
  position: absolute;
  width: 17px;
  height: 17px;
  border: 2px solid #000;
  outline: 2px solid #c4c4c4;
  outline-offset: 0;
}
.mini-back {
  left: 7px;
  top: 88px;
  background: #000;
}
.mini-front {
  left: 1px;
  top: 83px;
  background: #fff;
}
.seg {
  display: flex;
  width: 118px;
  height: 40px;
  margin-top: 14px;
  border: 2px solid #4a4a4a;
  border-radius: 4px;
}
.seg.draw {
  margin-top: 9px;
}
.seg span {
  display: flex;
  align-items: center;
  justify-content: center;
  flex: 1;
}
.seg .on {
  background: #333;
}
.seg.draw svg {
  width: 24px;
  height: 24px;
}
.cs {
  display: block;
  width: 26px;
  height: 26px;
  border: 2px solid #000;
  background: #fff;
}
.cs.grad {
  background: linear-gradient(90deg, #fff, #222);
}
.cs svg {
  width: 100%;
  height: 100%;
}
.screen {
  width: 44px;
  height: 31px;
  margin: 16px 0 0 38px;
}
.ellipsis {
  display: flex;
  gap: 3px;
  margin: 44px 0 0 46px;
}
.ellipsis i {
  width: 7px;
  height: 7px;
  border-radius: 50%;
  background: #c4c4c4;
}

/* document area */
.center {
  display: flex;
  flex-direction: column;
  flex: none;
  width: 2571px;
  margin-right: 5px;
}
.tabs {
  display: flex;
  flex: none;
  height: 56px;
  margin-bottom: 2px;
  padding-left: 1px;
  background: #414141;
  font-size: 21.600px;
  font-weight: 600;
  line-height: 52px;
  white-space: nowrap;
}
.tab {
  width: 488px;
  color: #a6a6a6;
}
.tab.current {
  width: 609px;
  background: #545454;
  color: #eee;
}
.x {
  display: inline-block;
  width: 48px;
  padding-left: 14px;
  font-weight: 400;
  font-size: 22px;
}
.view {
  display: flex;
  flex: 1;
  min-height: 0;
}
.canvas {
  position: relative;
  flex: none;
  width: 2539px;
  height: 1354px;
  overflow: hidden;
  background: #5f615f;
}
.vscroll {
  display: flex;
  flex-direction: column;
  align-items: center;
  flex: 1;
  background: #4b4b4b;
  color: #8f8f8f;
}
.vscroll .up {
  margin-top: 13px;
}
.vthumb {
  width: 30px;
  height: 50px;
  margin-top: 711px;
  border-radius: 15px;
  background: #616161;
}
.vscroll .down {
  margin-top: auto;
  margin-bottom: 13px;
}
.statusbar {
  display: flex;
  align-items: center;
  flex: none;
  height: 32px;
  padding-left: 9px;
  background: #4b4b4b;
  font-size: 21px;
}
.sb-box {
  width: 136px;
  height: 32px;
  margin-right: 10px;
  border-width: 1px;
  background: #464646;
}
.sb-box .field,
.sb-page .field {
  padding-left: 6px;
  line-height: 35px;
}
.statusbar .drop {
  width: 35px;
}
.pager {
  width: 50px;
  height: 24px;
  margin: 0 17px 0 7px;
}
.sb-page {
  width: 118px;
  height: 32px;
  border-width: 1px;
  background: #464646;
}
.sb-page + .pager {
  margin-left: 17px;
}
.sb-text {
  width: 224px;
  margin-left: 85px;
  padding-top: 3px;
  white-space: nowrap;
  color: #b4b4b4;
}
.sb-arrow {
  width: 12px;
  height: 24px;
  margin-left: 103px;
}
.sb-lt {
  width: 10px;
  height: 24px;
  margin-left: 25px;
}
.hthumb {
  width: 51px;
  height: 30px;
  margin-left: 900px;
  border-radius: 15px;
  background: #616161;
}
.sb-gt {
  width: 10px;
  height: 24px;
  margin-left: 531px;
}

/* artboards, placed on the free canvas */
.lbl {
  position: absolute;
  font-size: 17px;
  line-height: 20px;
  color: #0c0c0c;
  white-space: nowrap;
}
.lbl-a { left: 0; top: -10px; }
.lbl-b { left: 1px; top: 548px; }
.lbl-c { left: 1px; top: 1140px; }
.lbl-d { left: 408px; top: 1140px; }
.board {
  position: absolute;
  background: #fff;
  box-shadow: 0 0 0 1px #8c8c8c;
}
.a1 { left: 1px; top: 35px; width: 721px; height: 425px; }
.a2 { left: 747px; top: 35px; width: 755px; height: 425px; }
.a3 { left: 1590px; top: 74px; width: 351px; height: 349px; border: 2px solid #000; box-shadow: none; }
.a4 { left: 2102px; top: 74px; width: 437px; height: 348px; }
.a5 { left: 1px; top: 586px; width: 721px; height: 425px; }
.a6 { left: 747px; top: 586px; width: 755px; height: 425px; }
.a7 { left: 1590px; top: 653px; width: 464px; height: 292px; }
.a8 { left: 2102px; top: 653px; width: 437px; height: 292px; }
.a9 { left: 1px; top: 1181px; width: 314px; height: 300px; }
.a10 { left: 408px; top: 1181px; width: 348px; height: 300px; }
.a11 { left: 834px; top: 1181px; width: 756px; height: 300px; }
.a12 { left: 1650px; top: 1181px; width: 757px; height: 300px; }
.mark {
  position: absolute;
  width: 161px;
  height: 153px;
}
.mark.black { --foil: #000; --spire: #fff; }
.mark.only { --foil: none; --spire: #000; }
.m-a1 { left: 103px; top: 137px; }
.m-a2 { left: 118px; top: 137px; }
.m-a3 { left: 91px; top: 96px; }
.m-a5 { left: 267px; top: 79px; }
.m-a6 { left: 301px; top: 79px; }
.m-a9 { left: 59px; top: 98px; }
.m-a10 { left: 93px; top: 98px; }
.m-a11 { left: 301px; top: 79px; }
.m-a12 { left: 138px; top: 137px; }
.word {
  position: absolute;
  margin: 0;
  font-family: "Liberation Serif", serif;
  font-size: 50px;
  line-height: 51px;
  word-spacing: 1.500px;
  white-space: nowrap;
  color: #333;
}
.word::first-line {
  letter-spacing: 2.800px;
}
.word b {
  color: #b0a691;
}
.word.light {
  color: #e6e4dc;
}
.word.mid {
  width: 400px;
  text-align: center;
}
.w-a1 { left: 289px; top: 163px; }
.w-a2 { left: 305px; top: 163px; }
.w-a4 { left: 21px; top: 130px; }
.w-a5 { left: 142px; top: 253px; text-indent: 14px; }
.w-a6 { left: 176px; top: 253px; }
.w-a7 { left: 65px; top: 105px; }
.w-a8 { left: 62px; top: 105px; }
.fade {
  position: absolute;
  left: 0;
  right: 0;
  bottom: 0;
  height: 60px;
  background: linear-gradient(rgba(0, 0, 0, 0), rgba(0, 0, 0, 0.05));
}

/* panel docks */
.dock {
  display: flex;
  flex-direction: column;
  gap: 2px;
  flex: none;
  width: 75px;
  margin-right: 5px;
}
.dock:last-child {
  margin-right: 0;
}
.group {
  flex: none;
  padding: 6px 0;
  background: #545454;
}
.group .grip {
  margin-bottom: 4px;
}
.group.rest {
  flex: 1;
}
.pi {
  display: flex;
  align-items: center;
  justify-content: center;
  height: 56px;
}
.pi svg {
  width: 40px;
  height: 40px;
}
.dockedge {
  height: 5px;
  background: #1e2226;
}
```
